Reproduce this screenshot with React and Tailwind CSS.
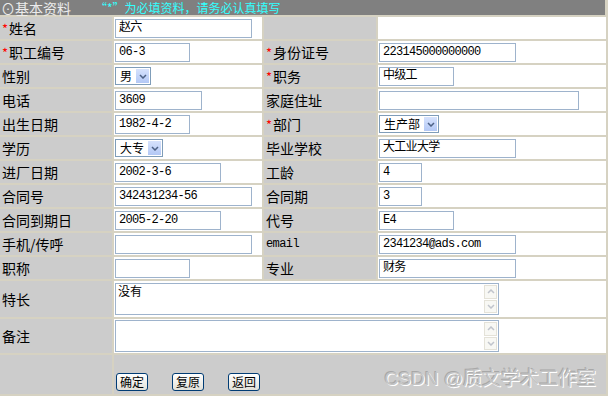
import React from "react";

const cjk = { fontFamily: '"Noto Sans CJK SC", "DejaVu Sans", sans-serif' };
const mono = { fontFamily: '"Liberation Mono", "Noto Sans CJK SC", monospace' };

function Label({ text, req, small }) {
  return (
    <div
      className="bg-[#cccccc] flex items-center pl-[2px] text-[14px] leading-none text-black"
      style={cjk}
    >
      {req && <span className="text-[#ff0000] text-[13px] mr-[1px]">*</span>}
      {small ? (
        <span className="text-[12px] tracking-[-0.6px]" style={mono}>
          {text}
        </span>
      ) : (
        text
      )}
    </div>
  );
}

function Input({ value, w }) {
  return (
    <div
      className={`${w} h-[19px] border border-[#9eb3cc] bg-white flex items-center pl-[3px] text-[12px] tracking-[-0.7px] text-black leading-none`}
      style={mono}
    >
      {value}
    </div>
  );
}

function Chevron({ up, color = "#4d6185" }) {
  return (
    <svg width="8" height="5" viewBox="0 0 8 5">
      <path
        d={up ? "M1 4 L4 1 L7 4" : "M1 1 L4 4 L7 1"}
        fill="none"
        stroke={color}
        strokeWidth="1.5"
      />
    </svg>
  );
}

function Select({ value, w }) {
  return (
    <div
      className={`${w} h-[18px] border border-[#7f9db9] bg-white flex items-center justify-between text-[12px] leading-none text-black`}
      style={cjk}
    >
      <span className="pl-[4px]">{value}</span>
      <span className="w-[15px] h-[16px] bg-gradient-to-b from-[#d6e2fc] to-[#b3c8f5] border border-white flex items-center justify-center">
        <Chevron />
      </span>
    </div>
  );
}

function Cell({ children }) {
  return <div className="bg-white flex items-center pl-[1px]">{children}</div>;
}

function TextArea({ value }) {
  return (
    <div className="w-[384px] h-[32px] border border-[#9eb3cc] bg-white flex justify-between">
      <span className="pl-[2px] pt-[1px] text-[12px] leading-none text-black" style={cjk}>
        {value}
      </span>
      <span className="w-[15px] flex flex-col gap-[1px] p-[1px]">
        <span className="flex-1 border border-[#e4e2d8] bg-[#f8f8f4] flex items-center justify-center">
          <Chevron up color="#c0c4cc" />
        </span>
        <span className="flex-1 border border-[#e4e2d8] bg-[#f8f8f4] flex items-center justify-center">
          <Chevron color="#c0c4cc" />
        </span>
      </span>
    </div>
  );
}

function Btn({ children }) {
  return (
    <button
      className="h-[18px] px-[3px] border border-[#003c74] rounded-[3px] bg-gradient-to-b from-white to-[#e2e1d9] text-[12px] leading-none text-black"
      style={cjk}
    >
      {children}
    </button>
  );
}

const rows = [
  [["姓名", true], { input: "赵六", w: "w-[137px]" }, ["", false], null],
  [["职工编号", true], { input: "06-3", w: "w-[75px]" }, ["身份证号", true], { input: "223145000000000", w: "w-[137px]" }],
  [["性别", false], { select: "男", w: "w-[36px]" }, ["职务", true], { input: "中级工", w: "w-[75px]" }],
  [["电话", false], { input: "3609", w: "w-[87px]" }, ["家庭住址", false], { input: "", w: "w-[200px]" }],
  [["出生日期", false], { input: "1982-4-2", w: "w-[75px]" }, ["部门", true], { select: "生产部", w: "w-[60px]" }],
  [["学历", false], { select: "大专", w: "w-[48px]" }, ["毕业学校", false], { input: "大工业大学", w: "w-[137px]" }],
  [["进厂日期", false], { input: "2002-3-6", w: "w-[106px]" }, ["工龄", false], { input: "4", w: "w-[43px]" }],
  [["合同号", false], { input: "342431234-56", w: "w-[137px]" }, ["合同期", false], { input: "3", w: "w-[43px]" }],
  [["合同到期日", false], { input: "2005-2-20", w: "w-[106px]" }, ["代号", false], { input: "E4", w: "w-[75px]" }],
  [["手机/传呼", false], { input: "", w: "w-[137px]" }, ["email", false, true], { input: "2341234@ads.com", w: "w-[137px]" }],
  [["职称", false], { input: "", w: "w-[75px]" }, ["专业", false], { input: "财务", w: "w-[137px]" }],
];

function renderField(f) {
  if (!f) return <Cell />;
  if (f.select) return <Cell><Select value={f.select} w={f.w} /></Cell>;
  return <Cell><Input value={f.input} w={f.w} /></Cell>;
}

export default function App() {
  return (
    <div className="w-[609px] h-[396px] bg-white overflow-hidden">
      <div className="w-[608px] bg-[#d6d2c2] pr-[3px] pb-[2px]">
        <div className="h-[15px] bg-[#808080] flex items-center leading-none" style={cjk}>
          <span className="text-[#ececec] text-[14px] leading-none pl-[1px]">⊙基本资料</span>
          <span className="text-[#33ffff] text-[12px] leading-none ml-[24px]">“*”为必填资料，请务必认真填写</span>
        </div>
        <div className="grid grid-cols-[112px_148px_112px_228px] grid-rows-[repeat(11,22px)_36px_34px_39px] gap-[2px] pt-[2px]">
          {rows.map((r, i) => (
            <React.Fragment key={i}>
              <Label text={r[0][0]} req={r[0][1]} />
              {renderField(r[1])}
              <Label text={r[2][0]} req={r[2][1]} small={r[2][2]} />
              {renderField(r[3])}
            </React.Fragment>
          ))}
          <Label text="特长" />
          <div className="col-span-3 bg-white flex items-center pl-[1px]">
            <TextArea value="没有" />
          </div>
          <Label text="备注" />
          <div className="col-span-3 bg-white flex items-center pl-[1px]">
            <TextArea value="" />
          </div>
          <div className="bg-[#cccccc]" />
          <div className="col-span-3 bg-[#cccccc] flex items-end justify-between pl-[2px] pb-[3px] pr-[10px]">
            <div className="flex gap-[24px]">
              <Btn>确定</Btn>
              <Btn>复原</Btn>
              <Btn>返回</Btn>
            </div>
            <span
              className="text-[19px] leading-none text-[#c4c4c4] [text-shadow:1px_1px_0_#ffffff,-1px_-1px_0_#a8a8a8] mb-[3px]"
              style={{ fontFamily: '"Liberation Sans", "Noto Sans CJK SC", sans-serif' }}
            >
              CSDN @质文学术工作室
            </span>
          </div>
        </div>
      </div>
    </div>
  );
}
